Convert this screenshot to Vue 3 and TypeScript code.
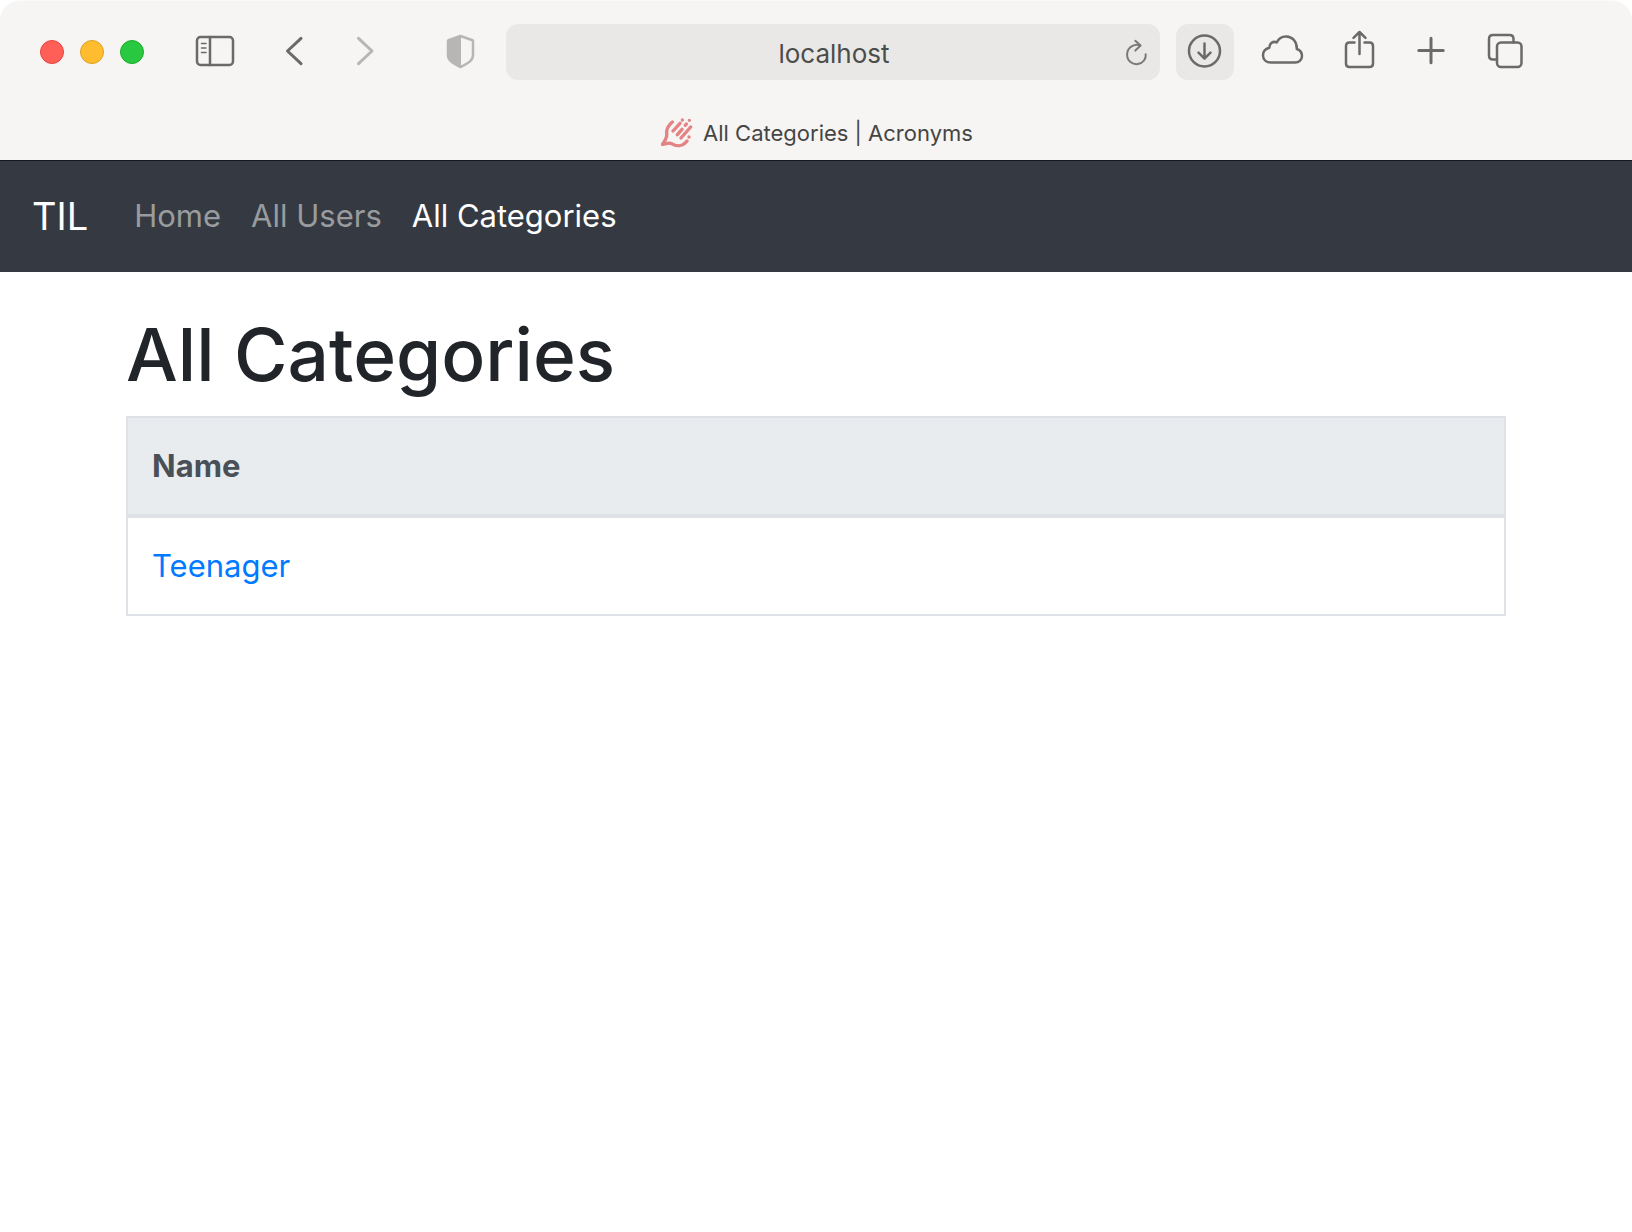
<script setup lang="ts">
import { ref } from 'vue'

interface NavItem {
  label: string
  active: boolean
}

interface Category {
  id: number
  name: string
}

const address = ref('localhost')

const navItems: NavItem[] = [
  { label: 'Home', active: false },
  { label: 'All Users', active: false },
  { label: 'All Categories', active: true },
]

const categories: Category[] = [{ id: 1, name: 'Teenager' }]
</script>

<template>
  <div class="window">
    <header class="chrome">
      <div class="toolbar">
        <div class="lights">
          <button class="light close" type="button" aria-label="Close"></button>
          <button class="light minimize" type="button" aria-label="Minimize"></button>
          <button class="light zoom" type="button" aria-label="Zoom"></button>
        </div>

        <button class="tool sidebar" type="button" aria-label="Sidebar">
          <svg viewBox="0 0 56 56">
            <rect x="9" y="13" width="36" height="28" rx="3.5" />
            <path d="M22 13v28" />
            <path class="thin" d="M13.5 19.5h4.5M13.5 24h4.5M13.5 28.5h4.5" />
          </svg>
        </button>
        <button class="tool back" type="button" aria-label="Back">
          <svg viewBox="0 0 56 56"><path class="bold" d="M35 14.3L21.5 27L35 39.7" /></svg>
        </button>
        <button class="tool forward faded" type="button" aria-label="Forward">
          <svg viewBox="0 0 56 56"><path class="bold" d="M20.5 14.3L34 27L20.5 39.7" /></svg>
        </button>
        <button class="tool shield faded" type="button" aria-label="Privacy report">
          <svg viewBox="0 0 56 56">
            <path d="M28.500 12L40.500 16.200Q41 16.400 41 17.500V31C41 36 37 39 28.500 43C20 39 16 36 16 31V17.500Q16 16.400 16.500 16.200Z" />
            <path class="solid" d="M29 12L16.500 16.200V31C16.500 36 20 39 29 43Z" />
          </svg>
        </button>

        <div class="address">
          <input v-model="address" type="text" aria-label="Address" />
          <button class="reload" type="button" aria-label="Reload">
            <svg viewBox="0 0 56 56">
              <path d="M29.500 21.200C27.500 20.500 24.500 20.700 22 22.200C16 25.500 15.500 34 20.500 38C25 41.500 31 40.500 34 36.500C35.500 34.500 36 32.500 35.700 30.300" />
              <path d="M25.300 16.800L30.600 21.600L25.300 26.600" />
            </svg>
          </button>
        </div>

        <button class="tool download" type="button" aria-label="Downloads">
          <svg viewBox="0 0 58 56">
            <circle cx="28.500" cy="27" r="15.500" />
            <path d="M28.500 19.500V34.500M22.500 28.700L28.500 34.700L34.500 28.700" />
          </svg>
        </button>
        <button class="tool cloud" type="button" aria-label="iCloud tabs">
          <svg viewBox="0 0 56 56">
            <path d="M17 38.500H41C45.200 38.500 48 35.600 48 32C48 28.800 46 26 42.800 25C43 17.500 38.500 12.800 32.500 12.500C28 12.300 24.500 14.800 22.700 18.500C19 16.600 15.300 19.600 15.300 23.700C11.500 24.700 9 27.700 9 31.200C9 35.500 12.300 38.500 17 38.500Z" />
          </svg>
        </button>
        <button class="tool share" type="button" aria-label="Share">
          <svg viewBox="0 0 56 56">
            <path d="M22.500 18.500H17.500Q14 18.500 14 22V39.500Q14 43 17.500 43H37.500Q41 43 41 39.500V22Q41 18.500 37.500 18.500H32.500" />
            <path d="M27.500 30V9M21.500 13.800L27.500 8L33.500 13.800" />
          </svg>
        </button>
        <button class="tool plus" type="button" aria-label="New tab">
          <svg viewBox="0 0 56 56"><path class="bold" d="M27 14.300V38.700M14.800 26.500H39.200" /></svg>
        </button>
        <button class="tool overview" type="button" aria-label="Tab overview">
          <svg viewBox="0 0 56 56">
            <rect x="19" y="18.500" width="24.500" height="24.500" rx="4" />
            <path d="M19 35.500H15Q11 35.500 11 31.500V15Q11 11 15 11H31.500Q35.500 11 35.500 15V18.500" />
          </svg>
        </button>
      </div>

      <div class="tabs">
        <svg class="favicon" viewBox="0 0 96 90" aria-hidden="true">
          <path d="M34 12C22 22 16 34 17 46C19 60 11 70 4 79C14 80 20 71 32 77C48 87 66 84 78 69" />
          <path d="M36 39L57 16M49 50L63 34M60 60L89 27M73 22L76 18" />
          <path d="M64 6h.1M85 7h.1M84 57h.1" />
        </svg>
        <span>All Categories | Acronyms</span>
      </div>
    </header>

    <nav class="navbar">
      <a class="brand" href="#">TIL</a>
      <ul>
        <li v-for="item in navItems" :key="item.label">
          <a href="#" :class="{ active: item.active }">{{ item.label }}</a>
        </li>
      </ul>
    </nav>

    <main class="container">
      <h1>All Categories</h1>
      <table>
        <thead>
          <tr>
            <th scope="col">Name</th>
          </tr>
        </thead>
        <tbody>
          <tr v-for="category in categories" :key="category.id">
            <td><a href="#">{{ category.name }}</a></td>
          </tr>
        </tbody>
      </table>
    </main>
  </div>
</template>

<style>
body {
  margin: 0;
  background: #fff;
}
</style>

<style scoped>
.window {
  min-height: 100vh;
  font-family: Inter, "Liberation Sans", sans-serif;
  font-size: 31px;
  line-height: 48px;
  color: #212529;
}

.chrome {
  box-sizing: border-box;
  background: #f6f5f3;
  border-top: 1px solid #fbfaf9;
  border-radius: 20px 20px 0 0;
  color: #454544;
}

.toolbar {
  display: flex;
  align-items: center;
  padding: 23px 98px 24px 40px;
}

.lights {
  display: flex;
  gap: 16px;
}

button {
  padding: 0;
  border: 0;
  background: none;
}

.light {
  width: 24px;
  height: 24px;
  border: 1px solid;
  border-radius: 50%;
}

.close {
  background: #ff5f57;
  border-color: #e5453f;
}

.minimize {
  background: #febc2e;
  border-color: #e0a023;
}

.zoom {
  background: #28c840;
  border-color: #1dad2b;
}

.tool {
  flex: none;
  width: 56px;
  height: 56px;
  color: #6b6a68;
}

.faded {
  color: #b7b6b4;
}

svg {
  display: block;
  fill: none;
  stroke: currentColor;
  stroke-width: 2.5;
  stroke-linecap: round;
  stroke-linejoin: round;
}

.thin {
  stroke-width: 1.5;
}

.bold {
  stroke-width: 3;
}

.solid {
  fill: currentColor;
  stroke: none;
}

.sidebar {
  margin-left: 44px;
}

.back,
.share {
  margin-left: 22px;
}

.forward,
.plus {
  margin-left: 16px;
}

.shield {
  margin-left: 38px;
}

.address {
  display: flex;
  flex: 1;
  min-width: 0;
  height: 56px;
  margin: 0 16px 0 18px;
  border-radius: 12px;
  background: #e9e8e6;
}

.address input {
  flex: 1;
  min-width: 0;
  box-sizing: border-box;
  padding: 2px 0 0 52px;
  border: 0;
  outline: 0;
  background: none;
  font: 26px Inter, "Liberation Sans", sans-serif;
  color: #4c4c4b;
  text-align: center;
}

.reload {
  width: 50px;
  color: #7a7978;
}

.reload svg {
  width: 56px;
  height: 56px;
  stroke-width: 2;
}

.download {
  width: 58px;
  border-radius: 12px;
  background: #e9e8e6;
}

.cloud {
  margin-left: 20px;
}

.overview {
  margin-left: 18px;
}

.tabs {
  display: flex;
  justify-content: center;
  gap: 10px;
  height: 56px;
  padding-left: 2px;
  font-size: 22px;
  line-height: 58px;
}

.favicon {
  width: 32px;
  height: 30px;
  margin-top: 14px;
  color: #e38384;
  stroke-width: 10;
}

.navbar {
  display: flex;
  align-items: center;
  box-sizing: border-box;
  height: 112px;
  padding: 0 32px 2px;
  border-top: 1px solid #101820;
  background: #353a42;
}

.navbar a {
  color: #999c9f;
  text-decoration: none;
}

.navbar .brand {
  margin-right: 46px;
  font-size: 38px;
  color: #fff;
}

.navbar .active {
  color: #fff;
}

.navbar ul {
  display: flex;
  gap: 30px;
  margin: 0;
  padding: 0;
  list-style: none;
}

.container {
  box-sizing: border-box;
  max-width: 1440px;
  margin: 32px auto 0;
  padding: 0 30px;
}

h1 {
  margin: 0 0 16px;
  padding-top: 6px;
  font-size: 73px;
  font-weight: 500;
  line-height: 90px;
}

table {
  width: 100%;
  border-collapse: collapse;
  border: 2px solid #dee2e6;
}

th,
td {
  padding: 24px;
  text-align: left;
}

th {
  border-bottom: 4px solid #dee2e6;
  background: #e9ecef;
  color: #495057;
  font-weight: 700;
}

td a {
  color: #007bff;
  text-decoration: none;
}
</style>
